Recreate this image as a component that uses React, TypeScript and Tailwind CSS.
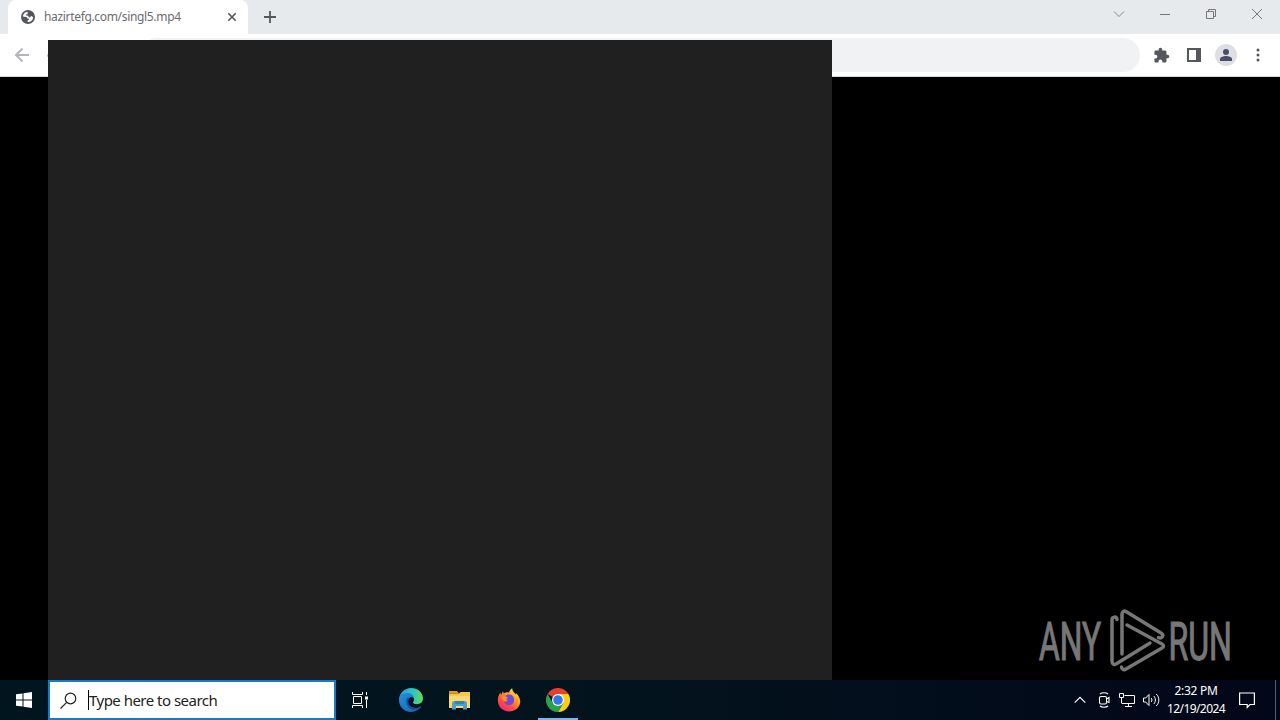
import * as React from 'react';

const BackIcon = () => (
  <svg className="h-4 w-4" viewBox="0 0 16 16" fill="none" stroke="#b4b6b9" strokeWidth="2">
    <path d="M15 8H2M8.500 1.500L2 8l6.500 6.500" />
  </svg>
);

const GlobeIcon = () => (
  <svg className="h-[14px] w-[14px]" viewBox="0 0 14 14">
    <circle cx="7" cy="7" r="7" fill="#54575b" />
    <path d="M6.500 1.800C4 2 2 4 1.900 6.600l3 .3c1.200 0 1.400.7 1.500 1.500l1.500.2c.5.7-.2 1.500-1.100 1.600l-.2 1.900c3 .2 5.400-2 5.500-4.800L10.500 6c-1 .1-.9 1.500-2 1.400-1.300-.1-1-1.700-2.300-1.900L5 5.200c-.1-1.300 1.600-.8 1.700-1.700z" fill="#fff" />
  </svg>
);

const PuzzleIcon = () => (
  <svg className="h-[17px] w-[17px]" viewBox="0 0 24 24" fill="#54575b">
    <path d="M20.500 11H19V7c0-1.100-.9-2-2-2h-4V3.500a2.500 2.500 0 0 0-5 0V5H4c-1.100 0-2 .9-2 2v3.800h1.500a2.700 2.700 0 0 1 0 5.400H2V20c0 1.100.9 2 2 2h3.800v-1.500a2.700 2.700 0 0 1 5.400 0V22H17c1.100 0 2-.9 2-2v-4h1.500a2.500 2.500 0 0 0 0-5z" />
  </svg>
);

const EdgeIcon = () => (
  <svg className="h-6 w-6" viewBox="0 0 24 24">
    <defs>
      <linearGradient id="edgeTop" x1="0" y1=".4" x2="1" y2=".5">
        <stop offset="0" stopColor="#249ddd" />
        <stop offset=".55" stopColor="#31c4c3" />
        <stop offset="1" stopColor="#61d955" />
      </linearGradient>
      <linearGradient id="edgeLow" x1="0" y1="0" x2="1" y2="1">
        <stop offset="0" stopColor="#218fda" />
        <stop offset="1" stopColor="#1a62b4" />
      </linearGradient>
    </defs>
    <path d="M0 11.500C.5 5 5.500 0 12 0c7 0 12 4.800 12 10.500 0 3.500-2.700 5.700-6 5.700-2.700 0-4.100-.8-4.100-1.700 0-.7 1.100-1.200 1.100-3 0-2.900-2.500-4.800-6-4.800-4 0-7.300 2-9 4.800z" fill="url(#edgeTop)" />
    <path d="M0 12c0-4.200 3.400-7 8-7 3.600 0 6.900 2.100 7 5.700-.8-1.200-2-1.700-3.200-1.400-2.200.6-3.500 3.400-2.400 6.300 1.400 3.700 6 5.400 10.100 3.800.8-.3 1.400-.7 1.900-1 .5-.2.9.2.6.7C19.800 22.200 16.200 24 12 24 5.200 24 0 18.700 0 12z" fill="url(#edgeLow)" />
    <path d="M8.500 9.500C6 13 7.500 19.500 13 21.500c3 .9 6-.2 8.300-2.100-3 1.500-7.500 1.300-10.200-1.500C8.800 15.500 8.500 12.500 10.500 10z" fill="#174c94" />
    <path d="M10.500 10.500c1.200-1.600 3.800-1.200 4.300.8.200 1.500-.9 2.300-.9 3.200 0 .8.900 1.400 2.100 1.700-2.300.8-5-.2-5.700-2.300-.4-1.200-.3-2.500.2-3.400z" fill="#04192c" />
  </svg>
);

const ExplorerIcon = () => (
  <svg className="h-6 w-6" viewBox="0 0 24 24">
    <path d="M1 3h8l2 2.500H1z" fill="#e69b1c" />
    <path d="M1 5.500h10l1.500-1.500H22v16H1z" fill="#f6c64d" />
    <path d="M1 8h21v12H1z" fill="#f9d873" />
    <path d="M4 21.500v-6A2.500 2.500 0 0 1 6.500 13h10a2.500 2.500 0 0 1 2.500 2.500v6h-4V18H8v3.500z" fill="#4f9fc9" />
    <path d="M7 13h9v3H7z" fill="#3583b0" />
  </svg>
);

const FirefoxIcon = () => (
  <svg className="h-6 w-6" viewBox="0 0 24 24">
    <defs>
      <linearGradient id="fox" x1=".9" y1="0" x2=".2" y2="1">
        <stop offset="0" stopColor="#fff04a" />
        <stop offset=".4" stopColor="#ff9d25" />
        <stop offset=".7" stopColor="#ff4d40" />
        <stop offset="1" stopColor="#f0208b" />
      </linearGradient>
    </defs>
    <path d="M3.500 4.500L4 7l2-3.700.8 2.200C8.500 4.300 10.500 4 12 4.700c.5-2 1.700-3.600 3.200-4.400.1 3.200 2 4.200 3.600 6.200L19 5c3 3 4.500 6 4.200 9.200C22.700 19.600 18 23.500 12 23.500 5.700 23.500.8 18.700.8 12.600.8 9.600 1.700 6.500 3.500 4.500z" fill="url(#fox)" />
    <path d="M8.200 8c1.500-2 5.300-2.200 7.300-.2 2.200 2.200 2.200 6.200-.2 8.200-2.200 1.900-6 1.500-7.500-.8-.5-.8-.7-1.700-.6-2.600 1 .9 2.300.9 3.200.1.300-1.200-1-1.700-2-2.600z" fill="#7546d8" />
    <path d="M4.200 9.500c1.400-1.400 3-1.700 4.300-1.200.7.600 1.500.9 2.500.9-.5 1.200-1.900 1.400-2.300 2.400.2.900 1 .9 1.800 1-1.100 1.200-2.500 1.100-3.600.4z" fill="#ff8a32" />
  </svg>
);

const ChromeIcon = () => (
  <svg className="h-6 w-6" viewBox="0 0 24 24">
    <path d="M12 12L1.600 6A12 12 0 0 1 22.400 6H12z" fill="#e4402f" />
    <path d="M22.400 6A12 12 0 0 1 12 24l5.200-9L12 6z" fill="#fccd16" />
    <path d="M12 24A12 12 0 0 1 1.600 6l5.200 9L17.200 15z" fill="#2aa14c" />
    <circle cx="12" cy="12" r="6" fill="#fff" />
    <circle cx="12" cy="12" r="4.800" fill="#3179e8" />
  </svg>
);

const Watermark = () => (
  <svg className="h-[80px] w-[230px]" viewBox="0 0 230 80" fill="#777" fontFamily="Roboto, sans-serif">
    <g fontSize="53" stroke="#777" strokeWidth="1.200">
      <text transform="translate(19 60) scale(.6 1)">ANY</text>
      <text transform="translate(148.500 60) scale(.605 1)">RUN</text>
    </g>
    <g fill="none" stroke="#777" strokeWidth="3.500" strokeLinecap="round" strokeLinejoin="round">
      <path d="M97 19.500c-.5-3.500-5-3-5 .5v41c0 3 2 4 4 3l34-21" />
      <path d="M102 54V14c0-2.500 2-3.500 4-2.500L141 33c3.500 2 1 6.500-2.500 4.500" />
      <path d="M107 25l35 19c2 1 2 3 0 4l-36 21c-2.500 1.500-4.500 0-4.500-2" />
    </g>
  </svg>
);

const TabStrip = () => (
  <div className="flex h-[34px] bg-[#e7eaed] pl-2">
    <div className="flex w-60 items-center rounded-t-lg bg-white pr-[10px] pl-[13px]">
      <GlobeIcon />
      <span className="ml-[9px] flex-1 text-[12px] tracking-[-0.33px] whitespace-nowrap text-[#6a6c70]">hazirtefg.com/singl5.mp4</span>
      <svg className="h-3 w-3" viewBox="0 0 12 12" stroke="#54575b" strokeWidth="1.600">
        <path d="M2.300 2.300l7.400 7.400M9.700 2.300L2.300 9.700" />
      </svg>
    </div>
    <svg className="mt-[11px] ml-4 h-3 w-3" viewBox="0 0 12 12" stroke="#54575b" strokeWidth="1.800">
      <path d="M6 0v12M0 6h12" />
    </svg>
    <div className="ml-auto flex gap-[34px] pt-2 pr-[17px]">
      <svg className="h-3 w-3" viewBox="0 0 12 12" fill="none" stroke="#888">
        <path d="M1 3.500l5 5 5-5" />
      </svg>
      <svg className="h-3 w-3" viewBox="0 0 12 12" stroke="#777">
        <path d="M1 6.500h10" />
      </svg>
      <svg className="h-3 w-3" viewBox="0 0 12 12" fill="none" stroke="#777">
        <path d="M1.500 3.500h7v7h-7zM3.500 3.500v-2h7v7h-2" />
      </svg>
      <svg className="h-3 w-3" viewBox="0 0 12 12" stroke="#777">
        <path d="M1 1l10 10M11 1L1 11" />
      </svg>
    </div>
  </div>
);

const Toolbar = () => (
  <div className="flex h-[43px] items-center border-b border-[#d9dadc] bg-white pr-5 pl-[14px]">
    <BackIcon />
    <div className="ml-[17px] h-[3px] w-[3px] rounded-full bg-[#b4b6b9]" />
    <div className="ml-[90px] h-[34px] flex-1 rounded-full bg-[#f0f2f4]" />
    <div className="ml-[13px] flex items-center">
      <PuzzleIcon />
      <svg className="ml-[17px] h-[14px] w-[14px]" viewBox="0 0 14 14" fill="#54575b" fillRule="evenodd">
        <path d="M0 0h14v14H0zM2 2v10h7V2z" />
      </svg>
      <div className="ml-[14px] flex h-[22px] w-[22px] items-center justify-center rounded-full bg-[#dddfe5]">
        <svg className="h-3 w-3" viewBox="0 0 12 12" fill="#4a4d66">
          <circle cx="6" cy="3" r="3" />
          <path d="M0 12V10c0-2 3.500-3 6-3s6 1 6 3v2z" />
        </svg>
      </div>
      <svg className="ml-[19px] h-[14px] w-1" viewBox="0 0 4 14" fill="#54575b">
        <circle cx="2" cy="2" r="1.500" />
        <circle cx="2" cy="7" r="1.500" />
        <circle cx="2" cy="12" r="1.500" />
      </svg>
    </div>
  </div>
);

const Tray = () => (
  <div className="ml-auto flex items-center text-white">
    <svg className="h-5 w-3" viewBox="0 0 12 20" fill="none" stroke="#fff" strokeWidth="1.200">
      <path d="M.7 12.700L6 7.400l5.300 5.300" />
    </svg>
    <svg className="ml-[12px] h-5 w-[14px]" viewBox="0 0 14 20" fill="none" stroke="#fff" strokeWidth="1.100">
      <path d="M2 4c1.800-1.600 6.200-1.600 8 0M2 16c1.800 1.600 6.200 1.600 8 0" />
      <rect x="1.500" y="6.500" width="7" height="7.500" rx="1.500" />
      <path d="M8.500 9l2.500-1.500v5L8.500 11.500" />
    </svg>
    <svg className="ml-[7px] h-5 w-4" viewBox="0 0 16 20" fill="none" stroke="#fff">
      <path d="M5.500 5.500h10v8H3M.5 3.500h4v4h-4zM2.500 7.500v6M9.500 13.500v3M6 16.500h7" />
    </svg>
    <svg className="ml-[8px] h-5 w-[17px]" viewBox="0 0 17 20" fill="none" stroke="#fff">
      <path d="M.5 8h2.200L6 4.500v11L2.700 12H.5zM8.200 8c1 1 1 3 0 4M10.700 6c2.200 2 2.200 6 0 8M13.200 4c3.500 3 3.500 9 0 12" />
    </svg>
    <div className="ml-[6px] flex w-[60px] flex-col items-center text-[12px] leading-[18px] whitespace-nowrap">
      <div className="tracking-[-0.3px]">2:32 PM</div>
      <div className="tracking-[-0.6px]">12/19/2024</div>
    </div>
    <svg className="ml-[13px] h-5 w-4" viewBox="0 0 16 20" fill="none" stroke="#fff" strokeWidth="1.200">
      <path d="M.6 3h14.800v11.500H11l-2.800 3v-3H.6z" />
    </svg>
    <div className="ml-[20px] h-10 w-px bg-[#566071]" />
    <div className="w-1" />
  </div>
);

const Taskbar = () => (
  <div className="flex h-10 items-center bg-linear-to-r from-[#00151d] via-[#03131d] to-[#020719]">
    <div className="flex w-12 justify-center">
      <svg className="h-4 w-4" viewBox="0 0 16 16" fill="#fff">
        <path d="M0 2.300l6.500-.9v6.100H0zM7.500 1.200L16 0v7.500H7.500zM0 8.500h6.500v6.100L0 13.700zM7.500 8.500H16V16l-8.500-1.200z" />
      </svg>
    </div>
    <div className="flex h-10 w-72 items-center border-2 border-[#147bcb] bg-white pl-[10px]">
      <svg className="h-[17px] w-[17px]" viewBox="0 0 17 17" fill="none" stroke="#222" strokeWidth="1.200">
        <circle cx="10.500" cy="6.500" r="5.300" />
        <path d="M6.700 10.300L.5 16.500" />
      </svg>
      <div className="ml-[11px] h-5 w-px bg-black" />
      <span className="text-[15px] tracking-[-0.52px] whitespace-nowrap text-[#222]">Type here to search</span>
    </div>
    <svg className="ml-4 h-4 w-4" viewBox="0 0 16 16" fill="none" stroke="#fff">
      <path d="M.5 0v2.500h10V0M.5 16v-2.500h10V16M1.500 4.500h8v7h-8zM14.500 0v3M14.500 8v8" />
      <path d="M13 4.500h3v3h-3z" fill="#fff" stroke="none" />
    </svg>
    <div className="ml-[31px] flex gap-[25px]">
      <EdgeIcon />
      <ExplorerIcon />
      <FirefoxIcon />
      <div className="relative">
        <ChromeIcon />
        <div className="absolute top-[30px] -left-2 h-[2px] w-10 bg-[#76b9ed]" />
      </div>
    </div>
    <Tray />
  </div>
);

const App: React.FC = () => {
  return (
    <div className="relative flex h-[720px] w-[1280px] flex-col overflow-hidden bg-black font-['Noto_Sans',sans-serif]">
      <TabStrip />
      <Toolbar />
      <main className="flex flex-1 items-end justify-end bg-black pr-[30px]">
        <Watermark />
      </main>
      <Taskbar />
      <div className="absolute top-10 left-12 h-[640px] w-[784px] bg-[#202020]" />
    </div>
  );
};

export default App;
